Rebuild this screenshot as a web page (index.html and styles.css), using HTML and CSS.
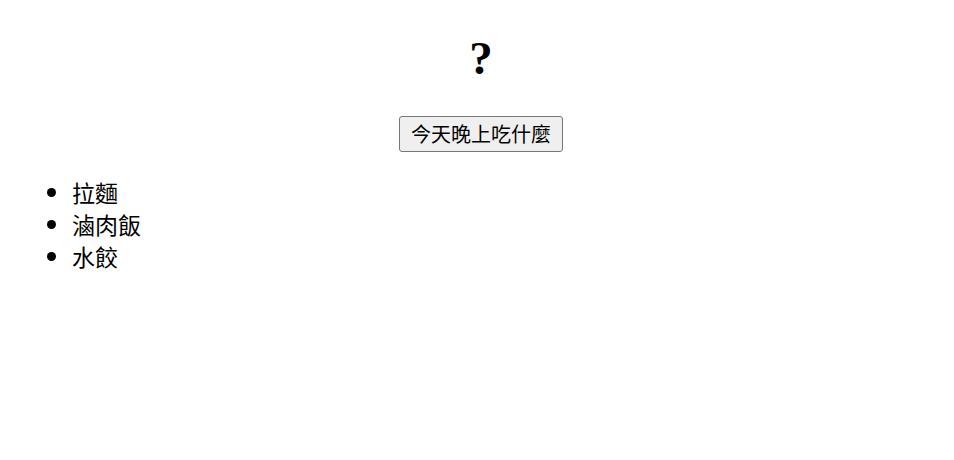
FILE: index.html
```html
<!DOCTYPE html>
<html lang="zh-Hant">
<head>
<meta charset="utf-8">
<link rel="stylesheet" href="styles.css">
</head>
<body>
<div class="app">
  <h1 class="title">?</h1>
  <div class="actions"><button class="pick">今天晚上吃什麼</button></div>
  <ul class="menu">
    <li>拉麵</li>
    <li>滷肉飯</li>
    <li>水餃</li>
  </ul>
</div>
</body>
</html>
```

FILE: styles.css
```css
body {
  margin: 8px;
  font-family: "Liberation Serif", "Noto Sans CJK TC", serif;
}
.app {
  padding-left: 8px;
}
.title {
  text-align: center;
  font-size: 47px;
  margin: 23px 0 31px;
  line-height: 1.15;
}
.actions {
  text-align: center;
}
.pick {
  font-family: "Noto Sans CJK TC", sans-serif;
  font-size: 20px;
  line-height: 28px;
  padding: 3px 11px;
  background: #efefef;
  border: 1px solid #767676;
  border-radius: 3px;
  color: #000;
}
.menu {
  font-family: "Noto Sans CJK TC", sans-serif;
  font-size: 23px;
  margin: 24px 0;
  padding-left: 56px;
  line-height: 32px;
}
```
